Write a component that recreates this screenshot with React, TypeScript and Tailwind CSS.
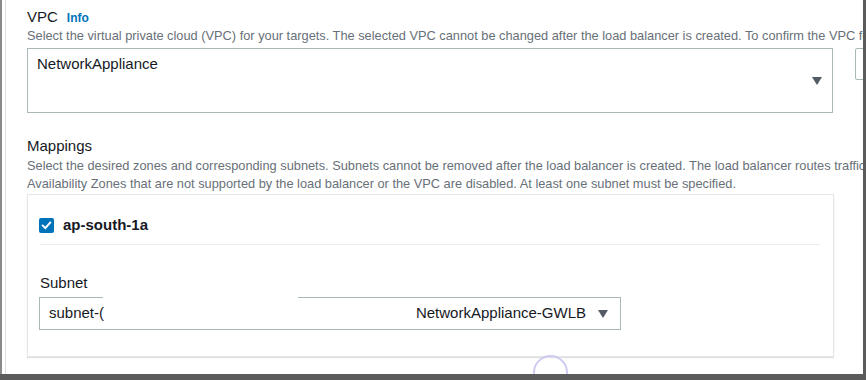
export default function App() {
  return (
    <div className="w-[866px] h-[380px] flex flex-col overflow-hidden bg-white font-['Liberation_Sans',Arial,sans-serif] text-[#16191f]">
      <div className="flex flex-1 min-h-0">
        <div className="w-[2px] bg-[#8a8a8a]" />
        <div className="w-[3px] bg-white" />
        <div className="w-[1px] bg-[#dedede]" />

        <div className="flex-1 min-w-0 overflow-hidden pl-[21px] pt-[8px]">
          {/* VPC */}
          <div className="flex items-baseline h-[18px] leading-[18px]">
            <span className="text-[15px]">VPC</span>
            <span className="ml-[9px] text-[12px] font-bold text-[#0073bb]">Info</span>
          </div>
          <p className="mt-[1px] whitespace-nowrap text-[12.8px] leading-[18px] text-[#687078]">
            Select the virtual private cloud (VPC) for your targets. The selected VPC cannot be changed after the load balancer is created. To confirm the VPC for your targets, view your target groups.
          </p>
          <div className="mt-[3px] flex items-start gap-[22px]">
            <div className="w-[806px] h-[65px] shrink-0 flex justify-between border border-[#aab7b8] pl-[9px] pr-[10px]">
              <span className="pt-[6px] text-[15px] leading-[18px]">NetworkAppliance</span>
              <Caret className="self-center" />
            </div>
            <div className="w-[40px] h-[32px] shrink-0 border border-[#aab7b8] rounded-[2px]" />
          </div>

          {/* Mappings */}
          <div className="mt-[24px] text-[15px] leading-[18px]">Mappings</div>
          <p className="mt-[2px] whitespace-nowrap text-[12.8px] leading-[18px] text-[#687078]">
            Select the desired zones and corresponding subnets. Subnets cannot be removed after the load balancer is created. The load balancer routes traffic to targets in these
            <br />
            Availability Zones that are not supported by the load balancer or the VPC are disabled. At least one subnet must be specified.
          </p>

          <div className="mt-[1px] w-[807px] border border-[#e4e7e7] shadow-[0_1px_1px_rgba(0,0,0,0.12)] pl-[12px] pr-[13px] pt-[21px] pb-[26px]">
            <div className="flex items-center gap-[9px] -ml-[1px]">
              <div className="w-[15px] h-[15px] rounded-[2px] bg-[#0073bb] flex items-center justify-center">
                <svg width="11" height="11" viewBox="0 0 11 11" fill="none">
                  <path d="M1.8 5.6 L4.3 8.1 L9.2 2.6" stroke="white" strokeWidth="2" strokeLinecap="square" />
                </svg>
              </div>
              <span className="text-[15px] font-bold leading-[18px]">ap-south-1a</span>
            </div>
            <div className="mt-[10px] h-px bg-[#eaeded]" />

            <div className="mt-[29px] text-[15px] leading-[18px]">Subnet</div>
            <div className="relative mt-[5px] -ml-[1px] w-[582px] h-[33px] border border-[#aab7b8] flex items-center justify-between pl-[9px] pr-[12px] text-[15px]">
              <span className="absolute left-[63px] -top-[1px] w-[195px] h-px bg-white" />
              <span>subnet-(</span>
              <div className="flex items-center gap-[12px]">
                <span>NetworkAppliance-GWLB</span>
                <Caret />
              </div>
            </div>
          </div>

          {/* loading ring */}
          <div className="-mt-[2px] ml-[506px] w-[35px] h-[35px] rounded-full border-2 border-[#cdccf0]" />
        </div>

        <div className="w-[3px] bg-[#5b5b5b]" />
      </div>
      <div className="h-[6px] bg-[#5b5b5b]" />
    </div>
  );
}

function Caret({ className = '' }: { className?: string }) {
  return (
    <svg className={className} width="10" height="8" viewBox="0 0 10 8">
      <path d="M0 0 H10 L5 8 Z" fill="#545b64" />
    </svg>
  );
}
